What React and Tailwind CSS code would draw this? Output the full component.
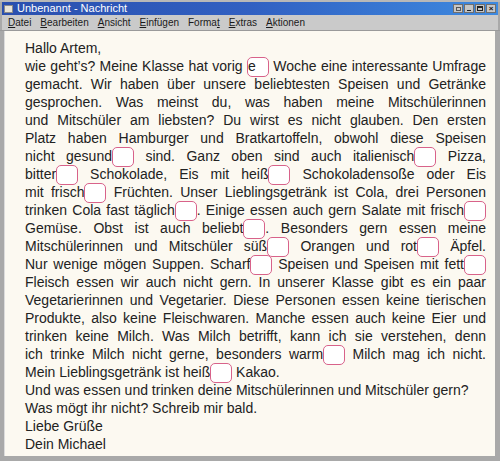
import React from "react";

const B = ({ children }) => (
  <span className="inline-block w-[22px] h-[20px] -my-[4px] align-middle border-[1.5px] border-[#d8628a] rounded-[5px] bg-white text-center leading-[17px]">
    {children}
  </span>
);

const J = ({ children }) => (
  <div className="h-[18px] text-justify [text-align-last:justify]">{children}</div>
);
const L = ({ children }) => <div className="h-[18px]">{children}</div>;

export default function App() {
  const menus = [
    ["D", "atei"],
    ["B", "earbeiten"],
    ["A", "nsicht"],
    ["E", "infügen"],
    ["Forma", "t", ""],
    ["E", "xtras"],
    ["A", "ktionen"],
  ];
  return (
    <div className="w-[500px] h-[461px] bg-[#a9a9a9] flex flex-col overflow-hidden" style={{ fontFamily: '"Liberation Sans", Arial, sans-serif' }}>
      <div className="h-[2px] bg-[#b8b8b8]" />
      <div className="h-[13px] mx-[2px] bg-gradient-to-r from-[#2a4fae] via-[#3160c2] to-[#3e8ae0] flex items-center px-[2px]">
        <div className="w-[9px] h-[8px] bg-[#e8e4d8] border border-[#8a8a8a] mr-[4px]" />
        <span className="text-white text-[11px] leading-none">Unbenannt - Nachricht</span>
        <div className="ml-auto flex gap-[1px]">
          <div className="w-[10px] h-[9px] bg-[#c6c6c6] border border-[#6f6f6f] flex items-center justify-center"><div className="w-[5px] h-[4px] border border-[#555]" /></div>
          <div className="w-[10px] h-[9px] bg-[#c6c6c6] border border-[#6f6f6f] flex items-end justify-center pb-[1px]"><div className="w-[4px] h-[1px] bg-[#222]" /></div>
          <div className="w-[10px] h-[9px] bg-[#c6c6c6] border border-[#6f6f6f] flex items-center justify-center"><div className="w-[6px] h-[5px] border border-[#222] border-t-2" /></div>
          <div className="w-[10px] h-[9px] bg-[#c6c6c6] border border-[#6f6f6f] flex items-center justify-center text-[8px] leading-none font-bold text-[#111]">×</div>
        </div>
      </div>
      <div className="h-[15px] mx-[2px] bg-[#cacaca] flex items-center gap-[9px] px-[6px] text-[10px] text-[#1a1a1a] leading-none">
        {menus.map((m, i) => (
          <span key={i}>
            {m.length === 3 ? (
              <>
                {m[0]}
                <span className="underline">{m[1]}</span>
              </>
            ) : (
              <>
                <span className="underline">{m[0]}</span>
                {m[1]}
              </>
            )}
          </span>
        ))}
      </div>
      <div className="h-[1px] bg-[#9a9a9a]" />
      <div className="flex-1 ml-[4px] mr-[5px] mb-[5px] bg-[#fcf9f1] border-l border-[#dcdcdc] pl-[20px] pr-[9px] pt-[8px] text-[14px] leading-[18px] text-[#222]">
        <L>Hallo Artem,</L>
        <J>wie geht’s? Meine Klasse hat vorig <B>e</B> Woche eine interessante Umfrage</J>
        <J>gemacht. Wir haben über unsere beliebtesten Speisen und Getränke</J>
        <J>gesprochen. Was meinst du, was haben meine Mitschülerinnen</J>
        <J>und Mitschüler am liebsten? Du wirst es nicht glauben. Den ersten</J>
        <J>Platz haben Hamburger und Bratkartoffeln, obwohl diese Speisen</J>
        <J>nicht gesund<B /> sind. Ganz oben sind auch italienisch<B /> Pizza,</J>
        <J>bitter<B /> Schokolade, Eis mit heiß<B /> Schokoladensoße oder Eis</J>
        <J>mit frisch<B /> Früchten. Unser Lieblingsgetränk ist Cola, drei Personen</J>
        <J>trinken Cola fast täglich<B />. Einige essen auch gern Salate mit frisch<B /></J>
        <J>Gemüse. Obst ist auch beliebt<B />. Besonders gern essen meine</J>
        <J>Mitschülerinnen und Mitschüler süß<B /> Orangen und rot<B /> Äpfel.</J>
        <J>Nur wenige mögen Suppen. Scharf<B /> Speisen und Speisen mit fett<B /></J>
        <J>Fleisch essen wir auch nicht gern. In unserer Klasse gibt es ein paar</J>
        <J>Vegetarierinnen und Vegetarier. Diese Personen essen keine tierischen</J>
        <J>Produkte, also keine Fleischwaren. Manche essen auch keine Eier und</J>
        <J>trinken keine Milch. Was Milch betrifft, kann ich sie verstehen, denn</J>
        <J>ich trinke Milch nicht gerne, besonders warm<B /> Milch mag ich nicht.</J>
        <L>Mein Lieblingsgetränk ist heiß<B /> Kakao.</L>
        <L>Und was essen und trinken deine Mitschülerinnen und Mitschüler gern?</L>
        <L>Was mögt ihr nicht? Schreib mir bald.</L>
        <L>Liebe Grüße</L>
        <L>Dein Michael</L>
      </div>
    </div>
  );
}
